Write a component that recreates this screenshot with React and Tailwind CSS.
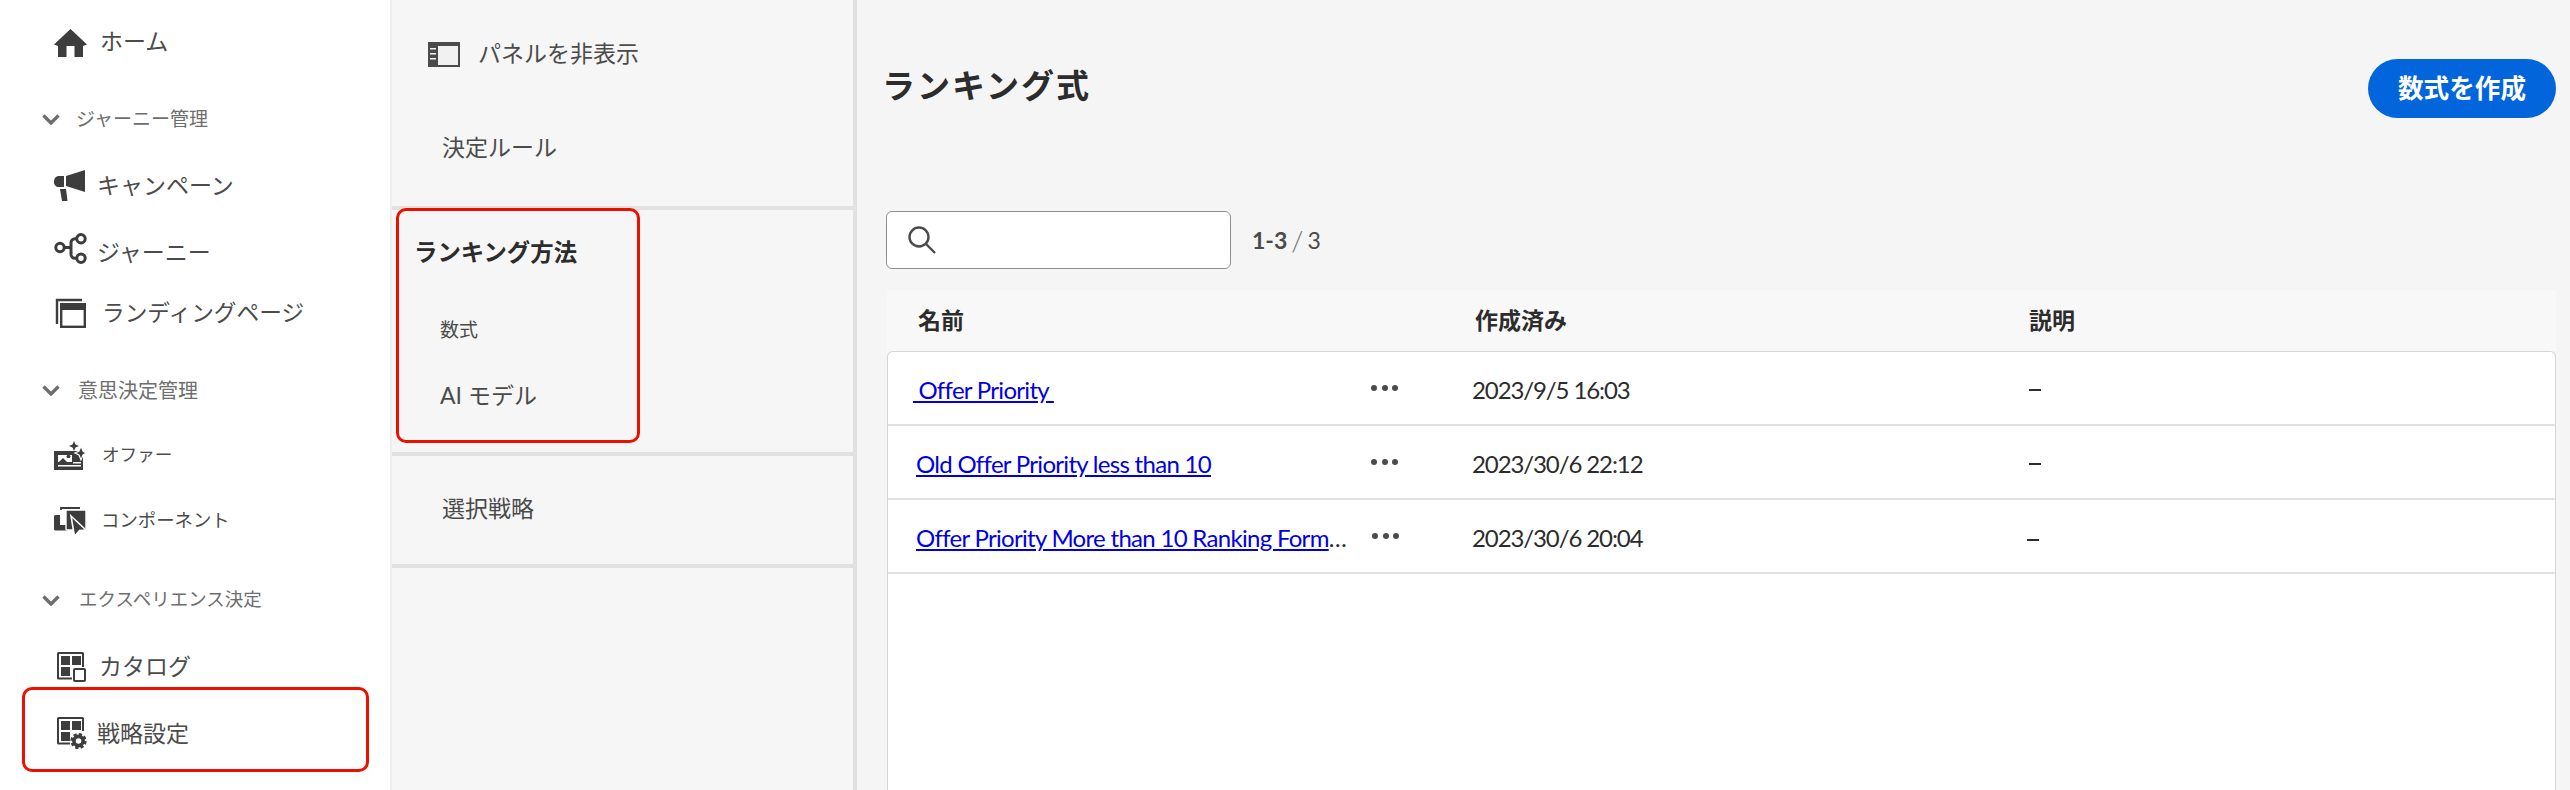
const cjk = "font-['Lato','Noto_Sans_CJK_JP',sans-serif]"

function Chevron() {
  return (
    <svg viewBox="0 0 18 11" className="w-[18px] h-[11px]" fill="none" stroke="#6e6e6e" strokeWidth="3.4">
      <path d="M1.5 1.5 L9 9 L16.5 1.5" />
    </svg>
  )
}

function HomeIcon() {
  return (
    <svg viewBox="0 0 33 28" className="w-[33px] h-[28px]" fill="#3d3d3d">
      <path d="M16.5 0 L33 15.5 L29 17 V28 H20.5 V17 H12.5 V28 H4 V17 L0 15.5 Z" />
    </svg>
  )
}

function MegaphoneIcon() {
  return (
    <svg viewBox="0 0 31 31" className="w-[31px] h-[31px]" fill="#3d3d3d">
      <path d="M10 6 H5 a5 5 0 0 0 -5 5 v2 a5 5 0 0 0 3 4 h7 Z" />
      <path d="M12 6 L31 0 V22 L12 16 Z" />
      <path d="M6 19 H12 L13.5 31 L8 31 Z" />
    </svg>
  )
}

function JourneyIcon() {
  return (
    <svg viewBox="0 0 33 31" className="w-[33px] h-[31px] mb-[3px]" fill="none" stroke="#3d3d3d" strokeWidth="3">
      <circle cx="6" cy="14.5" r="4.2" />
      <circle cx="27" cy="5.7" r="4.2" />
      <circle cx="27" cy="25.3" r="4.2" />
      <path d="M10 14.5 H17 M23 5.7 H21 a4 4 0 0 0 -4 4 V21.3 a4 4 0 0 0 4 4 H23" />
    </svg>
  )
}

function LandingIcon() {
  return (
    <svg viewBox="0 0 31 30" className="w-[31px] h-[30px]" fill="none" stroke="#3d3d3d" strokeWidth="2.4">
      <path d="M27 2 H2 V26" />
      <rect x="6.2" y="6.2" width="23.6" height="22.6" />
      <rect x="5" y="5" width="26" height="7" fill="#3d3d3d" stroke="none" />
    </svg>
  )
}

function OfferIcon() {
  return (
    <svg viewBox="0 0 32 29" className="w-[32px] h-[29px]">
      <rect x="0" y="10" width="29" height="19" fill="#3d3d3d" />
      <path d="M4 14 H18 V21 H4 Z" fill="#fff" />
      <path d="M5 21 L9 17 L13 21 Z M13 17 a2 2 0 1 1 3 0 Z" fill="#3d3d3d" />
      <path d="M4 24 H27 V25.6 H4 Z M19 21 H27 V22.4 H19 Z" fill="#fff" />
      <path d="M20 0 L21.5 3.5 L25 5 L21.5 6.5 L20 10 L18.5 6.5 L15 5 L18.5 3.5 Z" fill="#3d3d3d" />
      <path d="M27 5 L29 10 L32 12 L29 14 L27 19 L25 14 L21 12 L25 10 Z" fill="#3d3d3d" stroke="#fff" strokeWidth="1.2" />
    </svg>
  )
}

function ComponentIcon() {
  return (
    <svg viewBox="0 0 32 31" className="w-[32px] h-[31px]">
      <rect x="0" y="9" width="15" height="15.5" rx="1.5" fill="#3d3d3d" />
      <path d="M7 19 V2 H26" fill="none" stroke="#3d3d3d" strokeWidth="1.8" />
      <rect x="6" y="4" width="6" height="15" fill="#fff" />
      <rect x="12" y="4" width="20" height="20" rx="1" fill="#3d3d3d" stroke="#fff" strokeWidth="1.4" />
      <path d="M17 10 L32 24 L25.5 24.5 L20.5 30.5 Z" fill="#3d3d3d" stroke="#fff" strokeWidth="1.6" />
    </svg>
  )
}

function GridBase() {
  return (
    <>
      <rect x="1" y="1" width="25" height="25.5" fill="none" stroke="#3d3d3d" strokeWidth="2" rx="0.5" />
      <rect x="4" y="4" width="9" height="9" fill="#3d3d3d" />
      <rect x="15" y="4" width="9" height="9" fill="#3d3d3d" />
      <rect x="4" y="15" width="9" height="9" fill="#3d3d3d" />
    </>
  )
}

function CatalogIcon() {
  return (
    <svg viewBox="0 0 29 30" className="w-[29px] h-[30px]">
      <GridBase />
      <rect x="15" y="15" width="14" height="15" fill="#fff" />
      <rect x="17" y="17" width="11" height="12" rx="1" fill="#fff" stroke="#3d3d3d" strokeWidth="2" />
    </svg>
  )
}

function StrategyIcon() {
  return (
    <svg viewBox="0 0 31 33" className="w-[31px] h-[33px]">
      <GridBase />
      <rect x="13" y="14" width="18" height="19" fill="#fff" />
      <circle cx="21.5" cy="24" r="6.6" fill="none" stroke="#3d3d3d" strokeWidth="3" strokeDasharray="3.1 2.1" />
      <circle cx="21.5" cy="24" r="4.6" fill="none" stroke="#3d3d3d" strokeWidth="3.6" />
    </svg>
  )
}

function PanelIcon() {
  return (
    <svg viewBox="0 0 32 25" className="w-[32px] h-[25px]">
      <rect x="1" y="1" width="30" height="23" fill="#f1f1f1" stroke="#4b4b4b" strokeWidth="2" />
      <rect x="0" y="0" width="32" height="4" fill="#4b4b4b" />
      <rect x="0" y="0" width="10" height="25" fill="#4b4b4b" />
      <path d="M2 6 H8 V7.6 H2 Z M2 11 H8 V12.6 H2 Z M2 16 H8 V17.6 H2 Z" fill="#f1f1f1" />
    </svg>
  )
}

function SearchIcon() {
  return (
    <svg viewBox="0 0 28 28" className="w-[28px] h-[28px]" fill="none" stroke="#4b4b4b" strokeWidth="2.4">
      <circle cx="11" cy="11" r="9.5" />
      <path d="M18 18 L27 27" />
    </svg>
  )
}

function Dots() {
  return (
    <div className="flex gap-[4.5px]">
      <span className="w-[6px] h-[6px] rounded-full bg-[#4b4b4b]" />
      <span className="w-[6px] h-[6px] rounded-full bg-[#4b4b4b]" />
      <span className="w-[6px] h-[6px] rounded-full bg-[#4b4b4b]" />
    </div>
  )
}

function Sidebar() {
  return (
    <aside className="w-[392px] shrink-0 bg-white border-r-2 border-[#eeeeee] text-[#4b4b4b]">
      <div className="h-[86px] flex items-center pl-[54px] gap-[13px] text-[23px]">
        <HomeIcon />
        <span className="pb-[3px]">ホーム</span>
      </div>

      <div className="h-[66px] flex items-center pl-[42px] gap-[16px] text-[19px] text-[#6e6e6e]">
        <Chevron />
        <span>ジャーニー管理</span>
      </div>
      <div className="h-[66px] flex items-center pl-[54px] gap-[12px] text-[23px]">
        <MegaphoneIcon />
        <span>キャンペーン</span>
      </div>
      <div className="h-[64px] flex items-center pl-[54px] gap-[10px] text-[23px]">
        <JourneyIcon />
        <span className="pt-[5px]">ジャーニー</span>
      </div>
      <div className="h-[62px] flex items-center pl-[55px] gap-[16px] text-[22.7px]">
        <LandingIcon />
        <span>ランディングページ</span>
      </div>

      <div className="h-[92px] flex items-center pl-[42px] gap-[18px] text-[20px] text-[#6e6e6e]">
        <Chevron />
        <span>意思決定管理</span>
      </div>
      <div className="h-[38px] flex items-center pl-[54px] gap-[16px] text-[17.6px]">
        <OfferIcon />
        <span>オファー</span>
      </div>
      <div className="h-[94px] flex items-center pl-[54px] gap-[15px] text-[18.4px]">
        <ComponentIcon />
        <span>コンポーネント</span>
      </div>

      <div className="h-[64px] flex items-center pl-[42px] gap-[19px] text-[18.5px] text-[#6e6e6e]">
        <Chevron />
        <span>エクスペリエンス決定</span>
      </div>
      <div className="h-[70px] flex items-center pl-[57px] gap-[13px] text-[23px]">
        <CatalogIcon />
        <span className="pb-[2px]">カタログ</span>
      </div>
      <div className="relative h-[62px] flex items-center pl-[57px] gap-[9px] text-[23px]">
        <StrategyIcon />
        <span>戦略設定</span>
        {/* highlight drawn over the row */}
        <div className="absolute left-[22px] top-[-15px] w-[347px] h-[85px] border-[3px] border-[#eb1000] rounded-[10px]" />
      </div>
    </aside>
  )
}

function Panel() {
  return (
    <div className="w-[465px] shrink-0 bg-[#f6f6f6] border-r-4 border-[#e1e1e1] text-[23px] text-[#4b4b4b]">
      <section className="h-[210px] border-b-4 border-[#e1e1e1]">
        <div className="h-[108px] flex items-center pl-[36px] gap-[18px]">
          <PanelIcon />
          <span className="pb-[2px]">パネルを非表示</span>
        </div>
        <div className="h-[80px] flex items-center pl-[50px] pb-[2px]">決定ルール</div>
      </section>

      <section className="flow-root h-[246px] border-b-4 border-[#e1e1e1]">
        <div className="relative -mt-[2px] ml-[4px] w-[244px] h-[235px] border-[3px] border-[#eb1000] rounded-[10px]">
          <div className="h-[84px] flex items-center pl-[15px] text-[23.4px] font-bold text-[#2c2c2c]">ランキング方法</div>
          <div className="h-[70px] flex items-center pl-[41px] text-[19px]">数式</div>
          <div className="h-[60px] flex items-center pl-[41px] text-[23px]">AI モデル</div>
        </div>
      </section>

      <section className="h-[112px] border-b-4 border-[#e1e1e1] flex items-center pl-[50px] pb-[4px]">選択戦略</section>
    </div>
  )
}

const rows = [
  { name: ' Offer Priority ', date: '2023/9/5 16:03', indent: 'pl-[25px]', cell: 'w-[441px]', dots: 'ml-[17px]', dash: '' },
  { name: 'Old Offer Priority less than 10', date: '2023/30/6 22:12', indent: 'pl-[28px]', cell: 'w-[438px]', dots: 'ml-[17px]', dash: '' },
  { name: 'Offer Priority More than 10 Ranking Formula', date: '2023/30/6 20:04', indent: 'pl-[28px]', cell: 'w-[438px]', dots: 'ml-[18px]', dash: '-ml-[2px] pt-[8px]' },
]

function RankingTable() {
  return (
    <div className="flex-1 flex flex-col ml-px mt-[21px] min-h-0">
      <div className="h-[61px] shrink-0 bg-[#f8f8f8] grid grid-cols-[585px_557px_1fr] items-center text-[23px] font-bold text-[#2c2c2c]">
        <div className="pl-[31px]">名前</div>
        <div className="pl-[3px]">作成済み</div>
        <div>説明</div>
      </div>
      <div className="flex-1 bg-white border-x border-t border-[#d5d5d5] rounded-t-[6px]">
        {rows.map((row) => (
          <div key={row.name} className="h-[74px] border-b-2 border-[#e1e1e1] grid grid-cols-[584px_557px_1fr] items-center text-[24px] tracking-[-0.7px] text-[#2c2c2c]">
            <div className={`flex items-center ${row.indent}`}>
              <div className={`${row.cell} shrink-0 truncate whitespace-pre pt-[4px]`}>
                <a href="#" className="text-[#0000e6] underline">{row.name}</a>
              </div>
              <div className={row.dots}>
                <Dots />
              </div>
            </div>
            <div className="pt-[4px] tracking-[-1.1px]">{row.date}</div>
            <div className={`pt-[4px] ${row.dash}`}>
              <div className="w-[12px] h-[2px] bg-[#2c2c2c]" />
            </div>
          </div>
        ))}
      </div>
    </div>
  )
}

export default function App() {
  return (
    <div className={`h-[790px] w-[2570px] flex overflow-hidden ${cjk}`}>
      <Sidebar />
      <Panel />
      <main className="flex-1 min-w-0 bg-[#f5f5f5] pl-[29px] pr-[14px] pt-[59px] flex flex-col">
        <div className="flex items-center justify-between h-[59px] shrink-0">
          <h1 className="-ml-[4px] pb-[5px] text-[33px] font-bold text-[#2c2c2c] tracking-[2px]">ランキング式</h1>
          <button className="w-[188px] h-[59px] rounded-full bg-[#0265dc] text-white text-[25.6px] font-bold">
            数式を作成
          </button>
        </div>

        <div className="flex items-center mt-[93px] shrink-0">
          <div className="w-[345px] h-[58px] bg-white border border-[#8e8e8e] rounded-[6px] flex items-center pl-[21px]">
            <SearchIcon />
          </div>
          <div className="ml-[21px] flex items-center text-[23px] text-[#4b4b4b]">
            <span className="font-bold">1-3</span>
            <span className="mx-[4px] text-[28px] font-light text-[#6e6e6e]">/</span>
            <span>3</span>
          </div>
        </div>

        <RankingTable />
      </main>
    </div>
  )
}
